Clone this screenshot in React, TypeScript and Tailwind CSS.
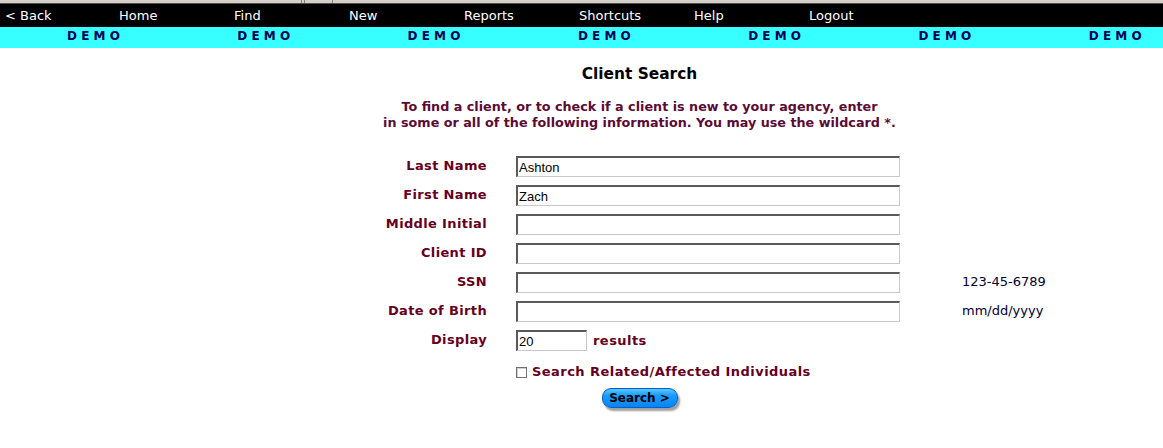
import React from "react";

const navItems = ["< Back", "Home", "Find", "New", "Reports", "Shortcuts", "Help", "Logout"];

const rows: { label: string; value?: string; hint?: string }[] = [
  { label: "Last Name", value: "Ashton" },
  { label: "First Name", value: "Zach" },
  { label: "Middle Initial" },
  { label: "Client ID" },
  { label: "SSN", hint: "123-45-6789" },
  { label: "Date of Birth", hint: "mm/dd/yyyy" },
];

function Input({ value, w }: { value?: string; w: string }) {
  return (
    <div
      className={`${w} h-[21px] border-t-2 border-l-2 border-r border-b border-t-[#5a5a5a] border-l-[#5a5a5a] border-r-[#c8c8c8] border-b-[#c8c8c8] bg-white pl-[1px] text-[13px] leading-[19px] text-black`}
      style={{ fontFamily: '"Liberation Sans", Arial, sans-serif' }}
    >
      {value}
    </div>
  );
}

export default function App() {
  return (
    <div className="w-[1163px] h-[448px] bg-white overflow-hidden" style={{ fontFamily: '"DejaVu Sans", Verdana, sans-serif' }}>
      {/* top gray strip */}
      <div className="flex h-[4px] bg-[#d4d0c8] border-b border-b-[#505050]">
        <div className="w-[302px] border-r border-r-[#808080]" />
        <div className="w-[3px] border-r border-r-[#808080]" />
        <div className="w-[28px] border-r border-r-[#808080]" />
      </div>
      {/* nav bar */}
      <div className="flex h-[23px] bg-black items-center pl-[4px]">
        {navItems.map((n, i) => (
          <div key={n} className={`w-[115px] shrink-0 text-white text-[13px] leading-none ${i === 0 ? "pl-[1px]" : ""}`}>
            {n}
          </div>
        ))}
      </div>
      {/* demo bar */}
      <div className="flex h-[21px] bg-[#38ffff] pl-[67px] pt-[2px]">
        {Array.from({ length: 7 }).map((_, i) => (
          <div key={i} className="w-[170.3px] shrink-0 text-[12px] font-bold text-[#000055] leading-[14px] whitespace-pre">
            D E M O
          </div>
        ))}
      </div>

      {/* body */}
      <div className="pl-[116px] pt-[17px] flex flex-col items-center">
        <div className="text-[15.4px] font-bold text-black leading-[19px]">Client Search</div>
        <div className="mt-[15px] text-center text-[12.75px] font-bold text-[#5c0a36] leading-[16px]">
          To find a client, or to check if a client is new to your agency, enter
          <br />
          in some or all of the following information. You may use the wildcard *.
        </div>
      </div>

      <div className="ml-[287px] mt-[25px] grid grid-cols-[229px_384px_auto] gap-y-[8px] items-center">
        {rows.map((r) => (
          <React.Fragment key={r.label}>
            <div className="pr-[29px] text-right text-[13px] tracking-[0.35px] font-bold text-[#660022] leading-[16px] -mt-[1px]">
              {r.label}
            </div>
            <Input value={r.value} w="w-[384px]" />
            <div className="pl-[62px] text-[13px] text-[#000033] leading-[16px] -mt-[2px]">{r.hint ?? ""}</div>
          </React.Fragment>
        ))}
        <div className="pr-[29px] text-right text-[13px] tracking-[0.35px] font-bold text-[#660022] leading-[16px] -mt-[1px]">Display</div>
        <div className="flex items-center gap-[6px]">
          <Input value="20" w="w-[71px]" />
          <span className="text-[13px] tracking-[0.45px] font-bold text-[#660022] leading-[16px]">results</span>
        </div>
        <div />
        <div />
        <div className="flex items-center gap-[5px] pt-[5px]">
          <span className="w-[11px] h-[11px] border border-[#707070] bg-white shadow-[inset_1px_1px_0_#d0d0d0]" />
          <span className="text-[13px] tracking-[0.45px] font-bold text-[#660022] leading-[16px]">Search Related/Affected Individuals</span>
        </div>
        <div />
      </div>

      <div className="pl-[116px] mt-[8px] flex justify-center">
        <button
          className="w-[76px] h-[20px] rounded-[9px] border border-[#0060d0] bg-[linear-gradient(#5cc8ff_0%,#1a9cff_35%,#0a84f0_100%)] shadow-[2px_3px_2px_#a0a0a0] text-[12px] font-bold text-black leading-[18px]"
        >
          Search &gt;
        </button>
      </div>
    </div>
  );
}
